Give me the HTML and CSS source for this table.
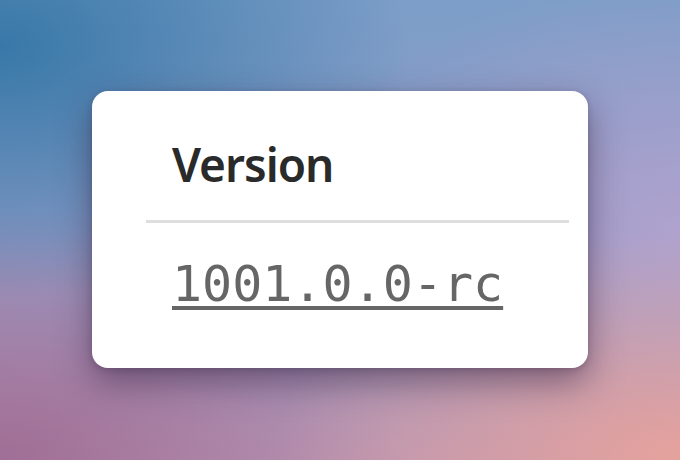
FILE: index.html
```html
<!DOCTYPE html>
<html lang="en">
<head>
<meta charset="utf-8">
<title>Version</title>
<link rel="stylesheet" href="styles.css">
</head>
<body>
<main class="stage">
  <section class="card">
    <h2 class="label">Version</h2>
    <hr class="divider">
    <a class="value" href="#">1001.0.0-rc</a>
  </section>
</main>
</body>
</html>
```
FILE: styles.css
```css
html, body {
  margin: 0;
  padding: 0;
  width: 680px;
  height: 460px;
  overflow: hidden;
}
.stage {
  width: 680px;
  height: 460px;
  box-sizing: border-box;
  padding: 91px 92px 0 92px;
  background:
    radial-gradient(ellipse 60% 55% at 0% 10%, rgba(52,118,166,0.95), rgba(52,118,166,0) 100%),
    radial-gradient(ellipse 60% 50% at 100% 100%, rgba(230,162,156,1), rgba(230,162,156,0) 100%),
    radial-gradient(ellipse 60% 55% at 0% 100%, rgba(160,110,150,1), rgba(160,110,150,0) 100%),
    radial-gradient(ellipse 55% 55% at 100% 50%, rgba(175,162,206,1), rgba(175,162,206,0) 100%),
    linear-gradient(180deg, #7c9ec8 0%, #8c9ac6 50%, #b896b4 100%);
}
.card {
  width: 496px;
  height: 277px;
  box-sizing: border-box;
  background: #fff;
  border-radius: 16px;
  box-shadow: 0 14px 34px rgba(50, 30, 60, 0.5), 0 2px 6px rgba(40, 30, 60, 0.2);
  padding: 42px 19px 0 54px;
  display: flex;
  flex-direction: column;
}
.label {
  margin: 0;
  padding-left: 26px;
  font-family: "Noto Sans", "Open Sans", sans-serif;
  font-weight: 600;
  font-size: 46px;
  line-height: 62px;
  color: #2a2a2a;
  letter-spacing: -1px;
}
.divider {
  margin: 25px 0 0 0;
  border: 0;
  height: 3px;
  background: #dedede;
}
.value {
  margin-top: 31px;
  margin-left: 26px;
  align-self: flex-start;
  font-family: "DejaVu Sans Mono", "Liberation Mono", monospace;
  font-size: 50px;
  line-height: 60px;
  color: #666;
  text-decoration: underline;
  text-decoration-thickness: 4px;
  text-underline-offset: 5px;
}
```
